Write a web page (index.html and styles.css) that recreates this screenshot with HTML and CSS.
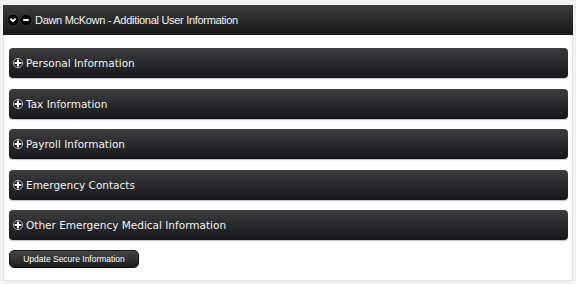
FILE: index.html
```
<!DOCTYPE html>
<html lang="en">
  <head>
    <meta charset="UTF-8" />
    <title>Additional User Information</title>
    <link rel="stylesheet" href="styles.css">
  </head>
  <body>
    <div class="user-box">
      <div class="user-header">
        <span class="round-icon">
          <svg width="12" height="12" viewBox="0 0 12 12"><circle cx="6" cy="6" r="5.8" fill="#050505" stroke="#555" stroke-width="0.4"/><path d="M3.4 4.6 L6 7.2 L8.6 4.6" stroke="#fff" stroke-width="1.9" fill="none"/></svg>
        </span>
        <span class="round-icon">
          <svg width="12" height="12" viewBox="0 0 12 12"><circle cx="6" cy="6" r="5.8" fill="#050505" stroke="#555" stroke-width="0.4"/><path d="M3.2 6 H8.8" stroke="#fff" stroke-width="1.9"/></svg>
        </span>
        <span class="user-title">Dawn McKown - Additional User Information</span>
      </div>

      <div class="sections">
        <div class="section-bar">
          <svg class="plus" width="10" height="10" viewBox="0 0 10 10"><circle cx="5" cy="5" r="4.6" fill="#111" stroke="#ddd" stroke-width="0.8"/><path d="M5 1.6 V8.4 M1.6 5 H8.4" stroke="#fff" stroke-width="2.2"/></svg>
          Personal Information
        </div>
        <div class="section-bar">
          <svg class="plus" width="10" height="10" viewBox="0 0 10 10"><circle cx="5" cy="5" r="4.6" fill="#111" stroke="#ddd" stroke-width="0.8"/><path d="M5 1.6 V8.4 M1.6 5 H8.4" stroke="#fff" stroke-width="2.2"/></svg>
          Tax Information
        </div>
        <div class="section-bar">
          <svg class="plus" width="10" height="10" viewBox="0 0 10 10"><circle cx="5" cy="5" r="4.6" fill="#111" stroke="#ddd" stroke-width="0.8"/><path d="M5 1.6 V8.4 M1.6 5 H8.4" stroke="#fff" stroke-width="2.2"/></svg>
          Payroll Information
        </div>
        <div class="section-bar">
          <svg class="plus" width="10" height="10" viewBox="0 0 10 10"><circle cx="5" cy="5" r="4.6" fill="#111" stroke="#ddd" stroke-width="0.8"/><path d="M5 1.6 V8.4 M1.6 5 H8.4" stroke="#fff" stroke-width="2.2"/></svg>
          Emergency Contacts
        </div>
        <div class="section-bar">
          <svg class="plus" width="10" height="10" viewBox="0 0 10 10"><circle cx="5" cy="5" r="4.6" fill="#111" stroke="#ddd" stroke-width="0.8"/><path d="M5 1.6 V8.4 M1.6 5 H8.4" stroke="#fff" stroke-width="2.2"/></svg>
          Other Emergency Medical Information
        </div>
        <button class="update-btn">Update Secure Information</button>
      </div>
    </div>
  </body>
</html>
```
FILE: styles.css
```
* {
  margin: 0;
  padding: 0;
  box-sizing: border-box;
}
body {
  background: #f1f1f1;
  padding: 5px 3px 4px 3px;
  font-family: "Liberation Sans", Arial, sans-serif;
}

.user-box {
  width: 570px;
  background: #fff;
  border: 1px solid #e2e2e2;
  border-top: none;
}

.user-header {
  height: 30px;
  display: flex;
  align-items: center;
  gap: 1px;
  padding-left: 4px;
  background: linear-gradient(#3a3c3e, #16181a);
  color: #fff;
  margin: 0 -1px;
}
.round-icon {
  display: flex;
}
.user-title {
  margin-left: 2px;
  font-size: 11px;
  letter-spacing: -0.3px;
  color: #f4f4f4;
}

.sections {
  padding: 13px 4px 12px 5px;
  display: flex;
  flex-direction: column;
  gap: 10.5px;
}
.section-bar {
  height: 30px;
  display: flex;
  align-items: center;
  gap: 3px;
  padding-left: 4px;
  border-radius: 4px;
  background: linear-gradient(#3b3d3f, #15171a);
  box-shadow: 0 1px 1px rgba(0, 0, 0, 0.25);
  color: #f2f2f2;
  font-family: "DejaVu Sans", Verdana, sans-serif;
  font-size: 10.5px;
}
.plus {
  flex-shrink: 0;
}

.update-btn {
  width: 130px;
  height: 18px;
  margin-top: -1px;
  border: 1px solid #111;
  border-radius: 5px;
  background: linear-gradient(#444648, #1a1c1e);
  color: #fff;
  font-family: "Liberation Sans", Arial, sans-serif;
  font-size: 8.5px;
}
```
